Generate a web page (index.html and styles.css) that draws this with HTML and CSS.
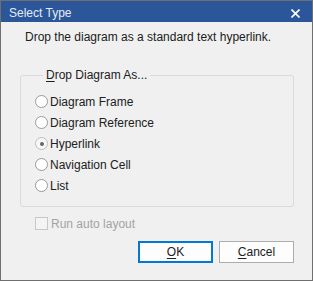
FILE: index.html
```html
<!DOCTYPE html>
<html>
<head>
<meta charset="utf-8">
<link rel="stylesheet" href="styles.css">
</head>
<body>
<div class="window">
  <div class="titlebar">
    <span class="title">Select Type</span>
    <svg class="close" width="9" height="9" viewBox="0 0 9 9"><path d="M0.5 0.5 L8.5 8.5 M8.5 0.5 L0.5 8.5" stroke="#ffffff" stroke-width="1.6" fill="none"/></svg>
  </div>
  <div class="content">
    <p class="message">Drop the diagram as a standard text hyperlink.</p>
    <fieldset class="group">
      <legend class="legend"><u>D</u>rop Diagram As...</legend>
      <div class="options">
        <div class="option"><span class="radio"></span><span>Diagram Frame</span></div>
        <div class="option"><span class="radio"></span><span>Diagram Reference</span></div>
        <div class="option"><span class="radio checked"></span><span>Hyperlink</span></div>
        <div class="option"><span class="radio"></span><span>Navigation Cell</span></div>
        <div class="option"><span class="radio"></span><span>List</span></div>
      </div>
    </fieldset>
    <div class="check-row"><span class="checkbox"></span><span>Run auto layout</span></div>
    <div class="buttons">
      <button class="btn default"><u>O</u>K</button>
      <button class="btn"><u>C</u>ancel</button>
    </div>
  </div>
</div>
</body>
</html>
```
FILE: styles.css
```css
html, body {
  margin: 0;
  padding: 0;
  background: #f0f0f0;
}
body {
  font-family: "Liberation Sans", Arial, sans-serif;
  font-size: 12px;
  color: #202020;
}
.window {
  box-sizing: border-box;
  width: 313px;
  height: 281px;
  border: 1px solid #6f6f6f;
  background: #f0f0f0;
  display: flex;
  flex-direction: column;
}
.titlebar {
  box-sizing: border-box;
  height: 21px;
  padding: 4px 12px 0 8px;
  background: #2b579a;
  display: flex;
  align-items: center;
  justify-content: space-between;
}
.title {
  color: #e6ebf3;
  line-height: 17px;
}
.close {
  display: block;
  margin-bottom: 0px;
}
.content {
  flex: 1;
  padding: 8px 18px 0 19px;
  display: flex;
  flex-direction: column;
}
.message {
  margin: 0 0 0 5px;
  line-height: 15px;
}
.group {
  margin: 23px 0 0 0;
  padding: 9px 0 10px 14px;
  border: 1px solid #dadada;
  border-radius: 3px;
  min-width: 0;
}
.legend {
  margin-left: 8px;
  padding: 0 3px;
  line-height: 14px;
}
.legend u {
  text-decoration-thickness: 1px;
  text-underline-offset: 2px;
}
.options {
  display: flex;
  flex-direction: column;
}
.option {
  height: 21px;
  display: flex;
  align-items: center;
  gap: 2px;
}
.radio {
  box-sizing: border-box;
  width: 13px;
  height: 13px;
  border: 1px solid #9a9a9a;
  border-radius: 50%;
  background: #ffffff;
  display: flex;
  align-items: center;
  justify-content: center;
}
.radio.checked {
  border-color: #bdbdbd;
  background: #f7f7f7;
}
.radio.checked::after {
  content: "";
  width: 4px;
  height: 4px;
  border-radius: 50%;
  background: #666666;
}
.check-row {
  margin: 9px 0 0 15px;
  height: 15px;
  display: flex;
  align-items: center;
  gap: 3px;
  color: #a3a3a3;
}
.checkbox {
  box-sizing: border-box;
  width: 13px;
  height: 13px;
  border: 1px solid #c8c8c8;
  background: #f4f4f4;
}
.buttons {
  margin-top: 10px;
  display: flex;
  justify-content: flex-end;
  gap: 6px;
}
.btn {
  box-sizing: border-box;
  width: 75px;
  height: 22px;
  margin: 0;
  padding: 0;
  font-family: "Liberation Sans", Arial, sans-serif;
  font-size: 12px;
  color: #202020;
  background: #fdfdfd;
  border: 1px solid #adadad;
  border-radius: 0;
}
.btn.default {
  border: 2px solid #0078d7;
}
.btn u {
  text-underline-offset: 2px;
}
```
